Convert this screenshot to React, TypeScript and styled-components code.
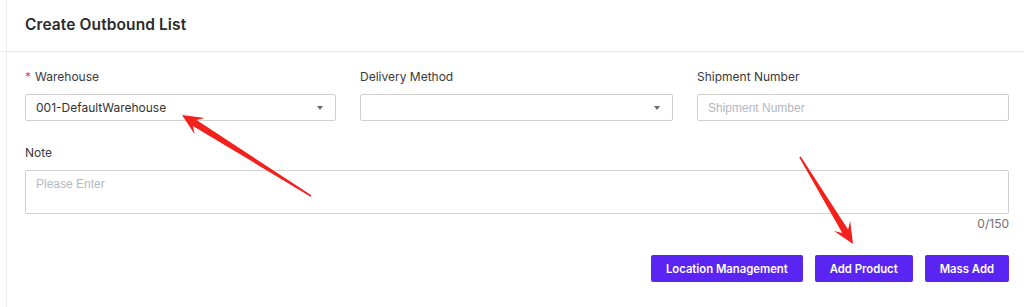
import React from 'react';
import styled, { createGlobalStyle } from 'styled-components';

const GlobalStyle = createGlobalStyle`
  html, body {
    margin: 0;
    padding: 0;
    background: #ffffff;
  }
  body {
    font-family: Inter, "Noto Sans", sans-serif;
    -webkit-font-smoothing: antialiased;
  }
`;

const Page = styled.div`
  position: relative;
  width: 1024px;
  height: 307px;
  overflow: hidden;
  background: #ffffff;
`;

const Card = styled.div`
  margin-left: 6px;
  border-left: 1px solid #ececec;
  height: 100%;
`;

const Header = styled.div`
  height: 52px;
  box-sizing: border-box;
  padding: 15px 0 0 25px;
  border-bottom: 1px solid #e8e8e8;
  margin-left: -7px;
`;

const Title = styled.h2`
  margin: 0;
  font-size: 15.5px;
  font-weight: 600;
  color: #2b2b2b;
  letter-spacing: 0.1px;
`;

const Body = styled.div`
  padding: 17px 15px 0 18px;
`;

const FieldGrid = styled.div`
  display: grid;
  grid-template-columns: 311px 313px 312px;
  column-gap: 24px;
`;

const Field = styled.div`
  display: flex;
  flex-direction: column;
`;

const Label = styled.label`
  font-size: 12px;
  color: #3a3a3a;
  height: 16px;
  line-height: 16px;
  margin-bottom: 9px;
`;

const Required = styled.span`
  color: #e84c4c;
  margin-right: 4px;
`;

const Box = styled.div<{ $tall?: boolean }>`
  box-sizing: border-box;
  height: ${(p) => (p.$tall ? '44px' : '27px')};
  border: 1px solid #cfcfcf;
  border-radius: 2px;
  display: flex;
  align-items: ${(p) => (p.$tall ? 'flex-start' : 'center')};
  justify-content: space-between;
  padding: ${(p) => (p.$tall ? '6px 10px' : '0 10px')};
  background: #fff;
`;

const Value = styled.span`
  font-size: 12px;
  color: #333;
`;

const Placeholder = styled.span`
  font-family: "Liberation Sans", Arial, sans-serif;
  font-size: 12px;
  color: #b4b8bf;
`;

const Caret = styled.span`
  width: 0;
  height: 0;
  border-left: 3.5px solid transparent;
  border-right: 3.5px solid transparent;
  border-top: 4px solid #6b6b6b;
  margin-right: 2px;
`;

const NoteField = styled(Field)`
  margin-top: 24px;
`;

const Counter = styled.div`
  text-align: right;
  font-size: 12px;
  color: #707070;
  margin-top: 2px;
  line-height: 16px;
`;

const Actions = styled.div`
  display: flex;
  justify-content: flex-end;
  gap: 12px;
  margin-top: 23px;
`;

const Button = styled.button`
  height: 27px;
  padding: 0 15px;
  border: none;
  border-radius: 2px;
  background: #5a24f2;
  color: #fff;
  font-family: Inter, "Noto Sans", sans-serif;
  font-size: 11.3px;
  font-weight: 600;
  cursor: pointer;
`;

const Overlay = styled.svg`
  position: absolute;
  left: 0;
  top: 0;
  pointer-events: none;
`;

type Pt = [number, number];

// tapered annotation arrow: thin at the tail, wide barbed head at the tip
const arrowPoints = (tail: Pt, tip: Pt) => {
  const [tx, ty] = tail;
  const [hx, hy] = tip;
  const len = Math.hypot(hx - tx, hy - ty);
  const ux = (hx - tx) / len;
  const uy = (hy - ty) / len;
  const nx = -uy;
  const ny = ux;
  const headLen = 21;
  const neckBack = 15;
  const headHalf = 9.5;
  const neckHalf = 3.4;
  const tailHalf = 0.8;
  const at = (d: number, w: number): string =>
    `${(tx + ux * d + nx * w).toFixed(1)},${(ty + uy * d + ny * w).toFixed(1)}`;
  const neck = len - neckBack;
  const base = len - headLen;
  return [
    at(0, tailHalf),
    at(neck, neckHalf),
    at(base, headHalf),
    `${hx},${hy}`,
    at(base, -headHalf),
    at(neck, -neckHalf),
    at(0, -tailHalf),
  ].join(' ');
};

export default function App() {
  return (
    <Page>
      <GlobalStyle />
      <Card>
        <Header>
          <Title>Create Outbound List</Title>
        </Header>
        <Body>
          <FieldGrid>
            <Field>
              <Label>
                <Required>*</Required>Warehouse
              </Label>
              <Box>
                <Value>001-DefaultWarehouse</Value>
                <Caret />
              </Box>
            </Field>
            <Field>
              <Label>Delivery Method</Label>
              <Box>
                <span />
                <Caret />
              </Box>
            </Field>
            <Field>
              <Label>Shipment Number</Label>
              <Box>
                <Placeholder>Shipment Number</Placeholder>
              </Box>
            </Field>
          </FieldGrid>
          <NoteField>
            <Label>Note</Label>
            <Box $tall>
              <Placeholder>Please Enter</Placeholder>
            </Box>
            <Counter>0/150</Counter>
          </NoteField>
          <Actions>
            <Button>Location Management</Button>
            <Button>Add Product</Button>
            <Button>Mass Add</Button>
          </Actions>
        </Body>
      </Card>
      <Overlay width="1024" height="307" viewBox="0 0 1024 307">
        <polygon points={arrowPoints([311, 196], [182, 115])} fill="#f2211c" />
        <polygon points={arrowPoints([800, 157], [853, 244])} fill="#f2211c" />
      </Overlay>
    </Page>
  );
}
